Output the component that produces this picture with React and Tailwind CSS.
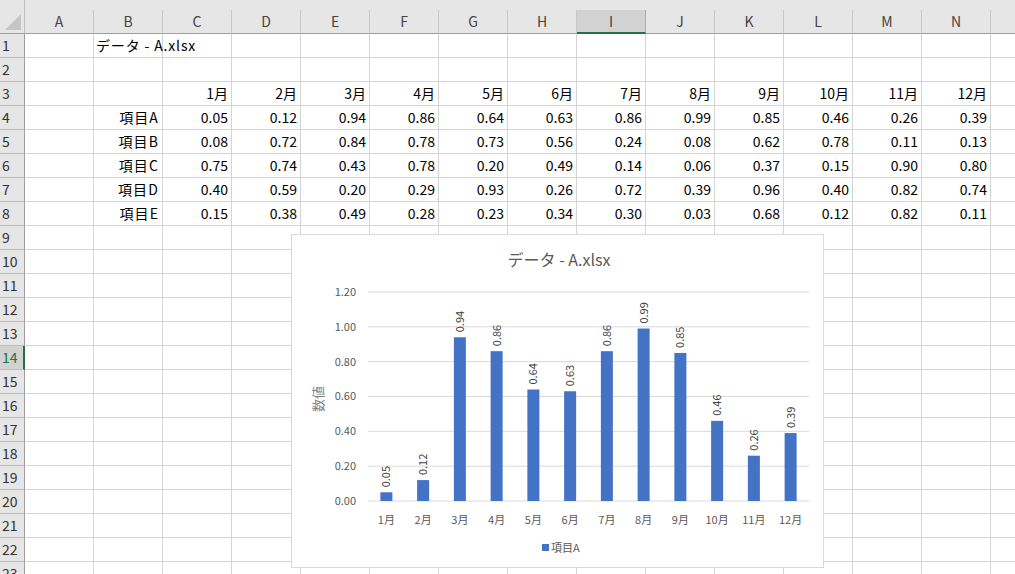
import React from 'react';

const FONT = { fontFamily: '"Noto Sans CJK JP", "Noto Sans", sans-serif' };

const COLS = ['A', 'B', 'C', 'D', 'E', 'F', 'G', 'H', 'I', 'J', 'K', 'L', 'M', 'N'];
const MONTHS = ['1月', '2月', '3月', '4月', '5月', '6月', '7月', '8月', '9月', '10月', '11月', '12月'];

const DATA = [
  ['項目A', [0.05, 0.12, 0.94, 0.86, 0.64, 0.63, 0.86, 0.99, 0.85, 0.46, 0.26, 0.39]],
  ['項目B', [0.08, 0.72, 0.84, 0.78, 0.73, 0.56, 0.24, 0.08, 0.62, 0.78, 0.11, 0.13]],
  ['項目C', [0.75, 0.74, 0.43, 0.78, 0.2, 0.49, 0.14, 0.06, 0.37, 0.15, 0.9, 0.8]],
  ['項目D', [0.4, 0.59, 0.2, 0.29, 0.93, 0.26, 0.72, 0.39, 0.96, 0.4, 0.82, 0.74]],
  ['項目E', [0.15, 0.38, 0.49, 0.28, 0.23, 0.34, 0.3, 0.03, 0.68, 0.12, 0.82, 0.11]],
];

// build the cell text for each row (14 columns A..N)
const rowCells = (r) => {
  const cells = Array(14).fill(null);
  if (r === 1) cells[1] = { text: 'データ - A.xlsx', left: true };
  if (r === 3) MONTHS.forEach((m, i) => (cells[i + 2] = { text: m }));
  if (r >= 4 && r <= 8) {
    const [label, vals] = DATA[r - 4];
    cells[1] = { text: label, wide: true };
    vals.forEach((v, i) => (cells[i + 2] = { text: v.toFixed(2) }));
  }
  return cells;
};

const ColumnHeader = () => (
  <div className="flex h-[34px] bg-[#e6e6e6]">
    <div className="w-[25px] shrink-0 h-full relative border-b border-[#9e9e9e] border-r border-r-[#bdbdbd]">
      <div className="absolute left-[5px] top-[14px] w-0 h-0 border-l-[16px] border-l-transparent border-b-[16px] border-b-[#c6c6c6]" />
    </div>
    {COLS.map((c) => (
      <div key={c} className="w-[69px] shrink-0 flex flex-col">
        <div className="h-[10px]" />
        <div
          className={
            c === 'I'
              ? 'flex-1 flex items-center justify-center bg-[#d2d2d2] border-r border-[#ababab] border-b-2 border-b-[#217346] text-[14px] text-[#444]'
              : 'flex-1 flex items-center justify-center border-r border-[#c8c8c8] border-b border-b-[#9e9e9e] text-[14px] text-[#444]'
          }
        >
          {c}
        </div>
      </div>
    ))}
    <div className="flex-1 flex flex-col">
      <div className="h-[10px]" />
      <div className="flex-1 border-b border-[#9e9e9e]" />
    </div>
  </div>
);

const Row = ({ r }) => {
  const cells = rowCells(r);
  const selected = r === 14;
  return (
    <div className="flex h-[24px]">
      <div
        className={
          selected
            ? 'w-[25px] shrink-0 flex items-center pl-[2px] bg-[#d2d2d2] border-r-2 border-[#217346] border-b border-b-[#bdbdbd] text-[14px] text-[#217346]'
            : 'w-[25px] shrink-0 flex items-center pl-[2px] bg-[#e6e6e6] border-r border-[#9e9e9e] border-b border-b-[#bdbdbd] text-[14px] text-[#333]'
        }
      >
        {r}
      </div>
      {cells.map((cell, i) => {
        let cls = 'w-[69px] shrink-0 flex items-center justify-end border-r border-b border-[#d4d4d4] text-[14px] text-black pr-[3px] whitespace-nowrap';
        if (cell && cell.left) {
          cls = 'w-[69px] shrink-0 flex items-center border-r border-b border-[#d4d4d4] text-[14px] text-black pl-[2px] tracking-[0.06em] whitespace-nowrap overflow-visible';
        } else if (cell && cell.wide) {
          cls = 'w-[69px] shrink-0 flex items-center justify-end border-r border-b border-[#d4d4d4] text-[14px] text-black pr-[3px] tracking-[0.08em] whitespace-nowrap';
        }
        return (
          <div key={i} className={cls}>
            {cell ? cell.text : ''}
          </div>
        );
      })}
      <div className="flex-1 border-b border-[#d4d4d4]" />
    </div>
  );
};

const VALUES = DATA[0][1];

const Chart = () => {
  const x0 = 76;
  const x1 = 517;
  const base = 266;
  const scale = 174.2;
  const step = (x1 - x0) / 12;
  const ticks = [0, 0.2, 0.4, 0.6, 0.8, 1.0, 1.2];
  return (
    <div className="absolute left-[291px] top-[234px] w-[533px] h-[334px] bg-white border border-[#d9d9d9]">
      <svg width="531" height="332" style={FONT}>
        <text x="267" y="31" textAnchor="middle" fontSize="16" fill="#595959">
          データ - A.xlsx
        </text>
        {ticks.map((t) => {
          const y = base - t * scale;
          return (
            <g key={t}>
              <line x1={x0} x2={x1} y1={y} y2={y} stroke="#d9d9d9" strokeWidth="1" />
              <text x="64" y={y + 4} textAnchor="end" fontSize="11" fill="#595959">
                {t.toFixed(2)}
              </text>
            </g>
          );
        })}
        <text
          x="0"
          y="0"
          fontSize="13"
          fill="#7f7f7f"
          textAnchor="middle"
          transform="translate(31 164) rotate(-90)"
        >
          数値
        </text>
        {VALUES.map((v, i) => {
          const cx = x0 + step * (i + 0.5);
          const top = base - v * scale;
          return (
            <g key={i}>
              <rect x={cx - 6} y={top} width="12" height={base - top} fill="#4472c4" />
              <text
                x="0"
                y="0"
                fontSize="11"
                fill="#404040"
                transform={`translate(${cx + 4} ${top - 5}) rotate(-90)`}
              >
                {v.toFixed(2)}
              </text>
              <text x={cx} y={base + 23} textAnchor="middle" fontSize="11" fill="#595959">
                {MONTHS[i]}
              </text>
            </g>
          );
        })}
        <rect x="250" y="309" width="7" height="7" fill="#4472c4" />
        <text x="259" y="317" fontSize="11" fill="#595959">
          項目A
        </text>
      </svg>
    </div>
  );
}

export default function App() {
  const rows = Array.from({ length: 23 }, (_, i) => i + 1);
  return (
    <div className="relative w-[1015px] h-[574px] overflow-hidden bg-white" style={FONT}>
      <ColumnHeader />
      {rows.map((r) => (
        <Row key={r} r={r} />
      ))}
      <Chart />
    </div>
  );
}
